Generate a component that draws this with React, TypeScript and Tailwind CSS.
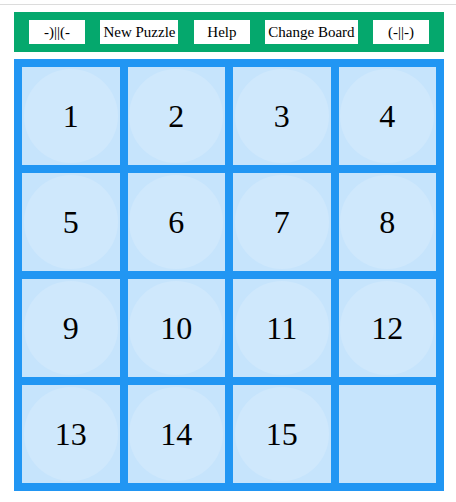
import React from "react";

const buttons = ["-)||(-", "New Puzzle", "Help", "Change Board", "(-||-)"];
const tiles: (number | null)[] = [1, 2, 3, 4, 5, 6, 7, 8, 9, 10, 11, 12, 13, 14, 15, null];

export default function App() {
  return (
    <div className="w-[456px] h-[502px] bg-white" style={{ fontFamily: '"Liberation Serif", "Times New Roman", serif' }}>
      <div className="h-[4px]" />
      <div className="h-px bg-[#dcdcdc]" />
      <div className="mx-[14px] mt-[7px] w-[430px]">
        <div className="flex items-center justify-between bg-[#05a86d] px-[15px] py-[8px]">
          {buttons.map((b) => (
            <button
              key={b}
              className="h-[24px] min-w-[56px] bg-white px-[3px] text-[15px] leading-none text-black"
            >
              {b}
            </button>
          ))}
        </div>
        <div className="mt-[7px] grid grid-cols-4 gap-[8px] bg-[#2196f3] p-[8px]">
          {tiles.map((t, i) => (
            <div key={i} className="flex h-[98px] items-center justify-center bg-[#c6e4fc]">
              {t !== null && (
                <div className="flex h-[94px] w-[94px] items-center justify-center rounded-full bg-[#cfe8fc] text-[32px] leading-none text-black">
                  {t}
                </div>
              )}
            </div>
          ))}
        </div>
      </div>
    </div>
  );
}
